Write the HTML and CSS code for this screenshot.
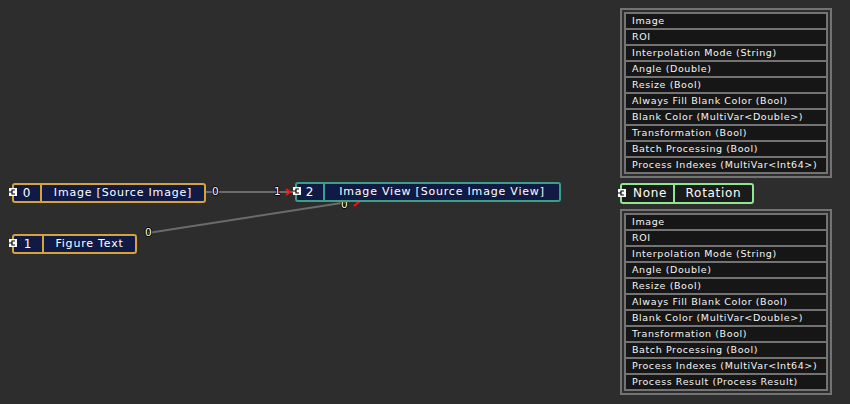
FILE: index.html
```html
<!DOCTYPE html>
<html>
<head>
<meta charset="utf-8">
<link rel="stylesheet" href="styles.css">
</head>
<body>
<div class="canvas">
  <svg class="wires" width="850" height="404" viewBox="0 0 850 404">
    <line x1="206" y1="192" x2="293" y2="192" stroke="#6b6b6b" stroke-width="2"/>
    <line x1="148" y1="233" x2="348" y2="202" stroke="#6b6b6b" stroke-width="2"/>
    <path d="M286 189 L290 192 L286 195" fill="none" stroke="#ff1010" stroke-width="2"/>
    <path d="M354 206 L360 201" fill="none" stroke="#ff1010" stroke-width="2"/>
  </svg>
  <span class="wlabel" style="left:212px;top:186px">0</span>
  <span class="wlabel" style="left:274px;top:186px">1</span>
  <span class="wlabel" style="left:145px;top:227px">0</span>
  <span class="wlabel" style="left:341px;top:199px">0</span>

  <div class="node gold n0">
    <span class="port"><svg width="8" height="8" viewBox="0 0 8 8"><path d="M0 4H3M6 2H3V6H6" fill="none" stroke="#000" stroke-width="1.2"/></svg></span>
    <div class="num">0</div>
    <div class="label">Image [Source Image]</div>
  </div>
  <div class="node gold n1">
    <span class="port"><svg width="8" height="8" viewBox="0 0 8 8"><path d="M0 4H3M6 2H3V6H6" fill="none" stroke="#000" stroke-width="1.2"/></svg></span>
    <div class="num">1</div>
    <div class="label">Figure Text</div>
  </div>
  <div class="node teal n2">
    <span class="port"><svg width="8" height="8" viewBox="0 0 8 8"><path d="M0 4H3M6 2H3V6H6" fill="none" stroke="#000" stroke-width="1.2"/></svg></span>
    <div class="num">2</div>
    <div class="label">Image View [Source Image View]</div>
  </div>

  <div class="side">
    <div class="panel">
      <div class="inner">
        <div class="row">Image</div>
        <div class="row">ROI</div>
        <div class="row">Interpolation Mode (String)</div>
        <div class="row">Angle (Double)</div>
        <div class="row">Resize (Bool)</div>
        <div class="row">Always Fill Blank Color (Bool)</div>
        <div class="row">Blank Color (MultiVar&lt;Double&gt;)</div>
        <div class="row">Transformation (Bool)</div>
        <div class="row">Batch Processing (Bool)</div>
        <div class="row">Process Indexes (MultiVar&lt;Int64&gt;)</div>
      </div>
    </div>
    <div class="node green rot">
      <span class="port"><svg width="8" height="8" viewBox="0 0 8 8"><path d="M0 4H3M6 2H3V6H6" fill="none" stroke="#000" stroke-width="1.2"/></svg></span>
      <div class="rnone">None</div>
      <div class="rlabel">Rotation</div>
    </div>
    <div class="panel">
      <div class="inner">
        <div class="row">Image</div>
        <div class="row">ROI</div>
        <div class="row">Interpolation Mode (String)</div>
        <div class="row">Angle (Double)</div>
        <div class="row">Resize (Bool)</div>
        <div class="row">Always Fill Blank Color (Bool)</div>
        <div class="row">Blank Color (MultiVar&lt;Double&gt;)</div>
        <div class="row">Transformation (Bool)</div>
        <div class="row">Batch Processing (Bool)</div>
        <div class="row">Process Indexes (MultiVar&lt;Int64&gt;)</div>
        <div class="row">Process Result (Process Result)</div>
      </div>
    </div>
  </div>
</div>
</body>
</html>
```
FILE: styles.css
```css
html, body {
  margin: 0;
  padding: 0;
  background: #2d2d2d;
}
.canvas {
  position: relative;
  width: 850px;
  height: 404px;
  overflow: hidden;
  font-family: "DejaVu Sans", sans-serif;
  color: #fff;
}
.wires {
  position: absolute;
  left: 0;
  top: 0;
}
.wlabel {
  position: absolute;
  font-size: 10.5px;
  line-height: 11px;
  color: #fff;
  text-shadow: 1px 0 0 #000, -1px 0 0 #000, 0 1px 0 #000, 0 -1px 0 #000;
}
.node {
  position: absolute;
  box-sizing: border-box;
  height: 20px;
  display: flex;
  align-items: stretch;
  border: 2px solid;
  border-radius: 3px;
  background: #111a45;
  font-size: 11px;
  letter-spacing: 0.8px;
  line-height: 16px;
}
.gold { border-color: #d6a33b; }
.teal { border-color: #3a9e88; }
.green { border-color: #8fe68f; background: #1b1b1b; }
.port {
  position: absolute;
  left: -5px;
  top: 3px;
  width: 8px;
  height: 8px;
  background: #fff;
  display: flex;
}
.num {
  width: 26px;
  text-align: center;
  border-right: 2px solid;
  border-color: inherit;
  flex: none;
  font-size: 12px;
}
.label {
  flex: 1;
  text-align: center;
}
.n0 { left: 12px; top: 183px; width: 194px; }
.n1 { left: 12px; top: 234px; width: 125px; }
.n1 .num { width: 28px; }
.n2 { left: 295px; top: 182px; width: 266px; }
.n2 .num { width: 26px; }
.n2 .port { left: -4px; top: 3px; }
.side {
  position: absolute;
  left: 620px;
  top: 8px;
  display: flex;
  flex-direction: column;
  gap: 5px;
  width: 212px;
}
.panel {
  border: 2px solid #737373;
  padding: 2px;
}
.inner {
  border: 2px solid #737373;
  background: #737373;
  display: flex;
  flex-direction: column;
  gap: 2px;
}
.row {
  height: 14px;
  background: #161616;
  font-size: 9.5px;
  line-height: 14px;
  letter-spacing: 0.6px;
  padding-left: 6px;
  color: #f4f4f4;
  white-space: nowrap;
}
.rot {
  position: relative;
  height: 21px;
  width: 134px;
  font-size: 12px;
  letter-spacing: 0.7px;
  line-height: 17px;
}
.rot .port { left: -4px; top: 4px; }
.rnone {
  width: 53px;
  padding-left: 11px;
  box-sizing: border-box;
  border-right: 2px solid;
  border-color: inherit;
}
.rlabel {
  flex: 1;
  text-align: center;
}
```
